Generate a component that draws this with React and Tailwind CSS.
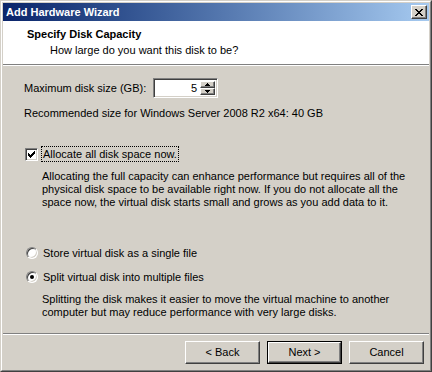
import React from "react";

const raised =
  "border border-t-white border-l-white border-r-[#404040] border-b-[#404040] shadow-[inset_-1px_-1px_0_#808080,inset_1px_1px_0_#d4d0c8] bg-[#d4d0c8]";
const sunken =
  "border border-t-[#808080] border-l-[#808080] border-r-white border-b-white shadow-[inset_1px_1px_0_#404040,inset_-1px_-1px_0_#d4d0c8]";

function Check() {
  const cols = [2, 3, 4, 3, 2, 1, 0];
  return (
    <svg width="7" height="7" viewBox="0 0 7 7" shapeRendering="crispEdges">
      {cols.map((y, i) => (
        <rect key={i} x={i} y={y} width="1" height="3" fill="#000" />
      ))}
    </svg>
  );
}

function Radio({ on }) {
  return (
    <div className="w-[12px] h-[12px] rounded-full border border-t-[#808080] border-l-[#808080] border-r-white border-b-white shadow-[inset_1px_1px_0_#404040,inset_-1px_-1px_0_#d4d0c8] bg-white flex items-center justify-center">
      {on && <div className="w-[4px] h-[4px] rounded-full bg-black" />}
    </div>
  );
}

function Button({ children, def }) {
  if (def) {
    return (
      <div className="w-[75px] h-[23px] border border-black">
        <div className={`${raised} w-full h-full flex items-center justify-center`}>{children}</div>
      </div>
    );
  }
  return <div className={`${raised} w-[75px] h-[23px] flex items-center justify-center`}>{children}</div>;
}

function Tri({ up }) {
  return (
    <svg width="5" height="3" viewBox="0 0 5 3" shapeRendering="crispEdges">
      {up ? (
        <>
          <rect x="2" y="0" width="1" height="1" fill="#000" />
          <rect x="1" y="1" width="3" height="1" fill="#000" />
          <rect x="0" y="2" width="5" height="1" fill="#000" />
        </>
      ) : (
        <>
          <rect x="0" y="0" width="5" height="1" fill="#000" />
          <rect x="1" y="1" width="3" height="1" fill="#000" />
          <rect x="2" y="2" width="1" height="1" fill="#000" />
        </>
      )}
    </svg>
  );
}

export default function App() {
  return (
    <div className="w-[432px] h-[372px] bg-[#d4d0c8] flex flex-col font-['Liberation_Sans',Arial,sans-serif] text-[11px] leading-[13px] text-black border border-t-[#d4d0c8] border-l-[#d4d0c8] border-r-[#404040] border-b-[#404040]">
      <div className="flex-1 flex flex-col border border-t-white border-l-white border-r-[#808080] border-b-[#808080] p-px min-h-0">
        {/* Title bar */}
        <div className="h-[18px] flex items-center justify-between pl-[3px] pr-[2px] bg-gradient-to-r from-[#0a246a] to-[#a6caf0]">
          <span className="text-white font-bold">Add Hardware Wizard</span>
          <div className={`${raised} w-[16px] h-[14px] flex items-center justify-center`}>
            <svg width="8" height="7" viewBox="0 0 8 7" shapeRendering="crispEdges">
              {[0, 1, 2, 3, 4, 5, 6].map((y) => (
                <React.Fragment key={y}>
                  <rect x={y < 4 ? y : 6 - y} y={y} width="2" height="1" fill="#000" />
                  <rect x={y < 4 ? 6 - y : y} y={y} width="2" height="1" fill="#000" />
                </React.Fragment>
              ))}
            </svg>
          </div>
        </div>

        {/* Header */}
        <div className="h-[43px] bg-white pt-[7px] pl-[24px]">
          <div className="font-bold">Specify Disk Capacity</div>
          <div className="mt-[3px] pl-[23px]">How large do you want this disk to be?</div>
        </div>
        <div className="h-px bg-[#808080]" />
        <div className="h-px bg-white" />

        {/* Body */}
        <div className="flex-1 flex flex-col pl-[21px]">
          <div className="mt-[12px] h-[20px] flex items-center">
            <span className="w-[129px]">Maximum disk size (GB):</span>
            <div className={`${sunken} w-[65px] h-[20px] flex bg-white p-[2px]`}>
              <div className="flex-1 flex items-center justify-end pr-[3px]">5</div>
              <div className="w-[15px] flex flex-col">
                <div className={`${raised} h-[8px] flex items-center justify-center`}>
                  <Tri up />
                </div>
                <div className={`${raised} h-[8px] flex items-center justify-center`}>
                  <Tri />
                </div>
              </div>
            </div>
          </div>
          <div className="mt-[9px]">Recommended size for Windows Server 2008 R2 x64: 40 GB</div>

          <div className="mt-[26px] h-[16px] flex items-center">
            <div className={`${sunken} ml-[1px] w-[13px] h-[13px] bg-white flex items-center justify-center`}>
              <Check />
            </div>
            <div className="ml-[3px] px-px h-[16px] flex items-center border border-dotted border-black">
              Allocate all disk space now.
            </div>
          </div>
          <div className="mt-[8px] pl-[18px] whitespace-nowrap">
            Allocating the full capacity can enhance performance but requires all of the
            <br />
            physical disk space to be available right now. If you do not allocate all the
            <br />
            space now, the virtual disk starts small and grows as you add data to it.
          </div>

          <div className="mt-[36px] h-[16px] flex items-center pl-[2px]">
            <Radio />
            <span className="ml-[5px]">Store virtual disk as a single file</span>
          </div>
          <div className="mt-[8px] h-[16px] flex items-center pl-[2px]">
            <Radio on />
            <span className="ml-[5px]">Split virtual disk into multiple files</span>
          </div>
          <div className="mt-[8px] pl-[18px] whitespace-nowrap">
            Splitting the disk makes it easier to move the virtual machine to another
            <br />
            computer but may reduce performance with very large disks.
          </div>
        </div>

        <div className="h-px bg-[#808080]" />
        <div className="h-px bg-white" />

        {/* Buttons */}
        <div className="h-[34px] flex items-start justify-end pt-[6px] pr-[5px] gap-[7px]">
          <Button>&lt; Back</Button>
          <Button def>Next &gt;</Button>
          <Button>Cancel</Button>
        </div>
      </div>
    </div>
  );
}
